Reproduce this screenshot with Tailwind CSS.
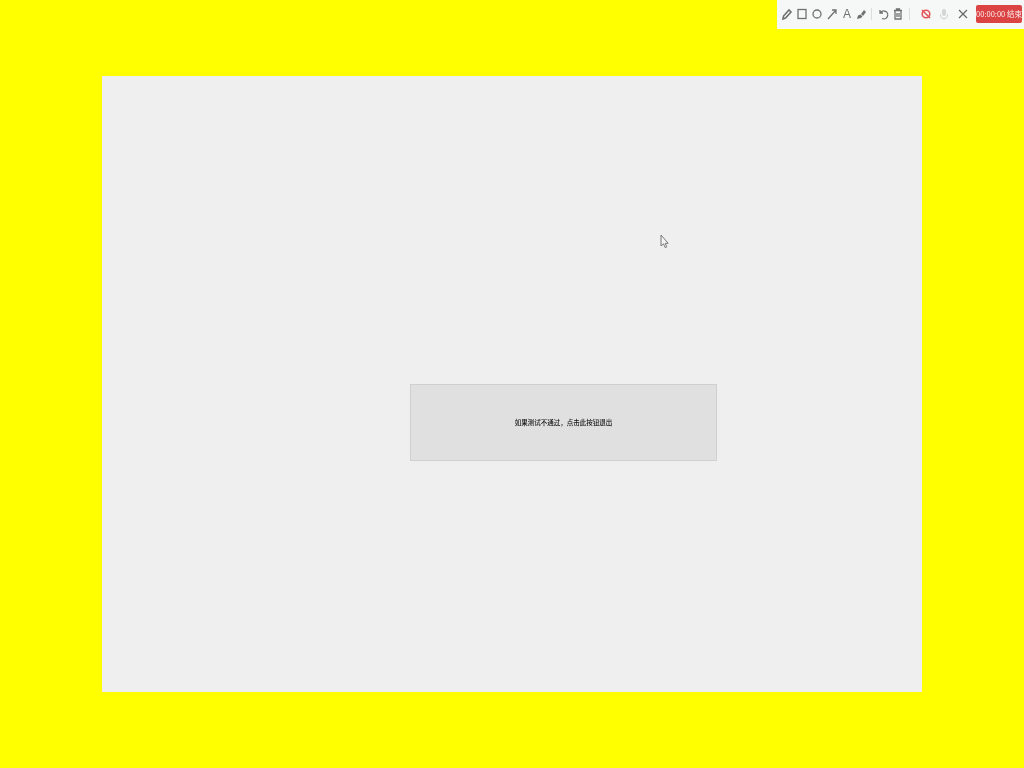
<!DOCTYPE html>
<html lang="zh-CN">
<head>
    <meta charset="UTF-8">
    <meta name="viewport" content="width=device-width, initial-scale=1.0">
    <title>测试</title>
    <script src="https://cdn.jsdelivr.net/npm/@tailwindcss/browser@4"></script>
</head>
<body class="relative bg-[#ffff00] w-[1024px] h-[768px] overflow-hidden flex items-center justify-center font-['Liberation_Sans','Noto_Sans_CJK_SC',sans-serif]">
    <!-- main panel -->
    <div class="relative w-[820px] h-[616px] bg-[#efefef] pt-[308px] pl-[308px] blur-[0.6px]">
        <button class="w-[307px] h-[77px] bg-[#e0e0e0] border border-[#d0d0d0] flex items-center justify-center text-[6.5px] font-medium text-[#111] font-['Noto_Sans_CJK_SC',sans-serif]">如果测试不通过，点击此按钮退出</button>
        <!-- mouse cursor -->
        <svg class="absolute left-[558px] top-[158px]" width="9" height="15" viewBox="0 0 9 15">
            <path d="M1 1V12L3.5 9.8L5.2 13.6L6.8 12.9L5.2 9.3H8.2Z" fill="#f4f4f4" stroke="#777" stroke-width="1"/>
        </svg>
    </div>

    <!-- annotation toolbar -->
    <div class="absolute top-0 right-0 w-[247px] h-[29px] bg-[#f6f8f8] flex items-center pl-[4px] pb-[1px] blur-[0.7px]">
        <div class="flex items-center gap-[3px] text-[#707070]">
            <svg width="12" height="14" viewBox="0 0 12 14" fill="none" stroke="currentColor" stroke-width="1.6"><path d="M2 12L2.5 9L8 3L10 5L4.5 11Z"/></svg>
            <svg width="12" height="14" viewBox="0 0 12 14" fill="none" stroke="currentColor" stroke-width="1.3"><rect x="2" y="2.5" width="8" height="9"/></svg>
            <svg width="12" height="14" viewBox="0 0 12 14" fill="none" stroke="currentColor" stroke-width="1.3"><circle cx="6" cy="7" r="4"/></svg>
            <svg width="12" height="14" viewBox="0 0 12 14" fill="none" stroke="currentColor" stroke-width="1.3"><path d="M2 12L10 3M6 3H10V7"/></svg>
            <span class="w-[12px] text-center text-[12px] leading-none">A</span>
            <svg class="-ml-[1px]" width="12" height="14" viewBox="0 0 12 14" fill="currentColor"><path d="M6 7L9 3L11 5L8 9Z"/><path d="M2 12L3 8.5L5.5 7.5L7.5 9.5L6 11Z"/></svg>
        </div>
        <div class="w-px h-[12px] bg-[#ddd] ml-[4px] mr-[5px]"></div>
        <div class="flex items-center gap-[3px] text-[#707070]">
            <svg width="12" height="14" viewBox="0 0 12 14" fill="none" stroke="currentColor" stroke-width="1.3"><path d="M3 3V6H6M3.2 6A4 4 0 1 1 5 11.5"/></svg>
            <svg width="12" height="14" viewBox="0 0 12 14" fill="none" stroke="currentColor" stroke-width="1.3"><path d="M2 3.5H10M4.5 3.5V2H7.5V3.500M3 4V12H9V4M5 6V10M7 6V10"/></svg>
        </div>
        <div class="w-px h-[12px] bg-[#ddd] ml-[5px] mr-[10px]"></div>
        <svg width="12" height="14" viewBox="0 0 12 14" fill="none" stroke="#e25555" stroke-width="1.6"><circle cx="6" cy="7" r="3.8"/><path d="M2 3L10 11"/></svg>
        <svg class="ml-[6px]" width="12" height="14" viewBox="0 0 12 14" fill="#d4d6d6"><rect x="4" y="2" width="4" height="7" rx="2"/><path d="M3 7V8A3 3 0 0 0 9 8V7H10V8.500A4 4 0 0 1 6.500 12V13H5.500V12A4 4 0 0 1 2 8.500V7Z"/></svg>
        <svg class="ml-[7px]" width="12" height="14" viewBox="0 0 12 14" fill="none" stroke="#666" stroke-width="1.2"><path d="M2 3L10 11M10 3L2 11"/></svg>
        <div class="ml-[7px] w-[46px] h-[18px] rounded-[2px] bg-[#dc4444] text-white/90 text-[7.500px] flex items-center justify-center whitespace-nowrap font-['Noto_Sans_CJK_SC',sans-serif]">00:00:00 结束</div>
    </div>
</body>
</html>
